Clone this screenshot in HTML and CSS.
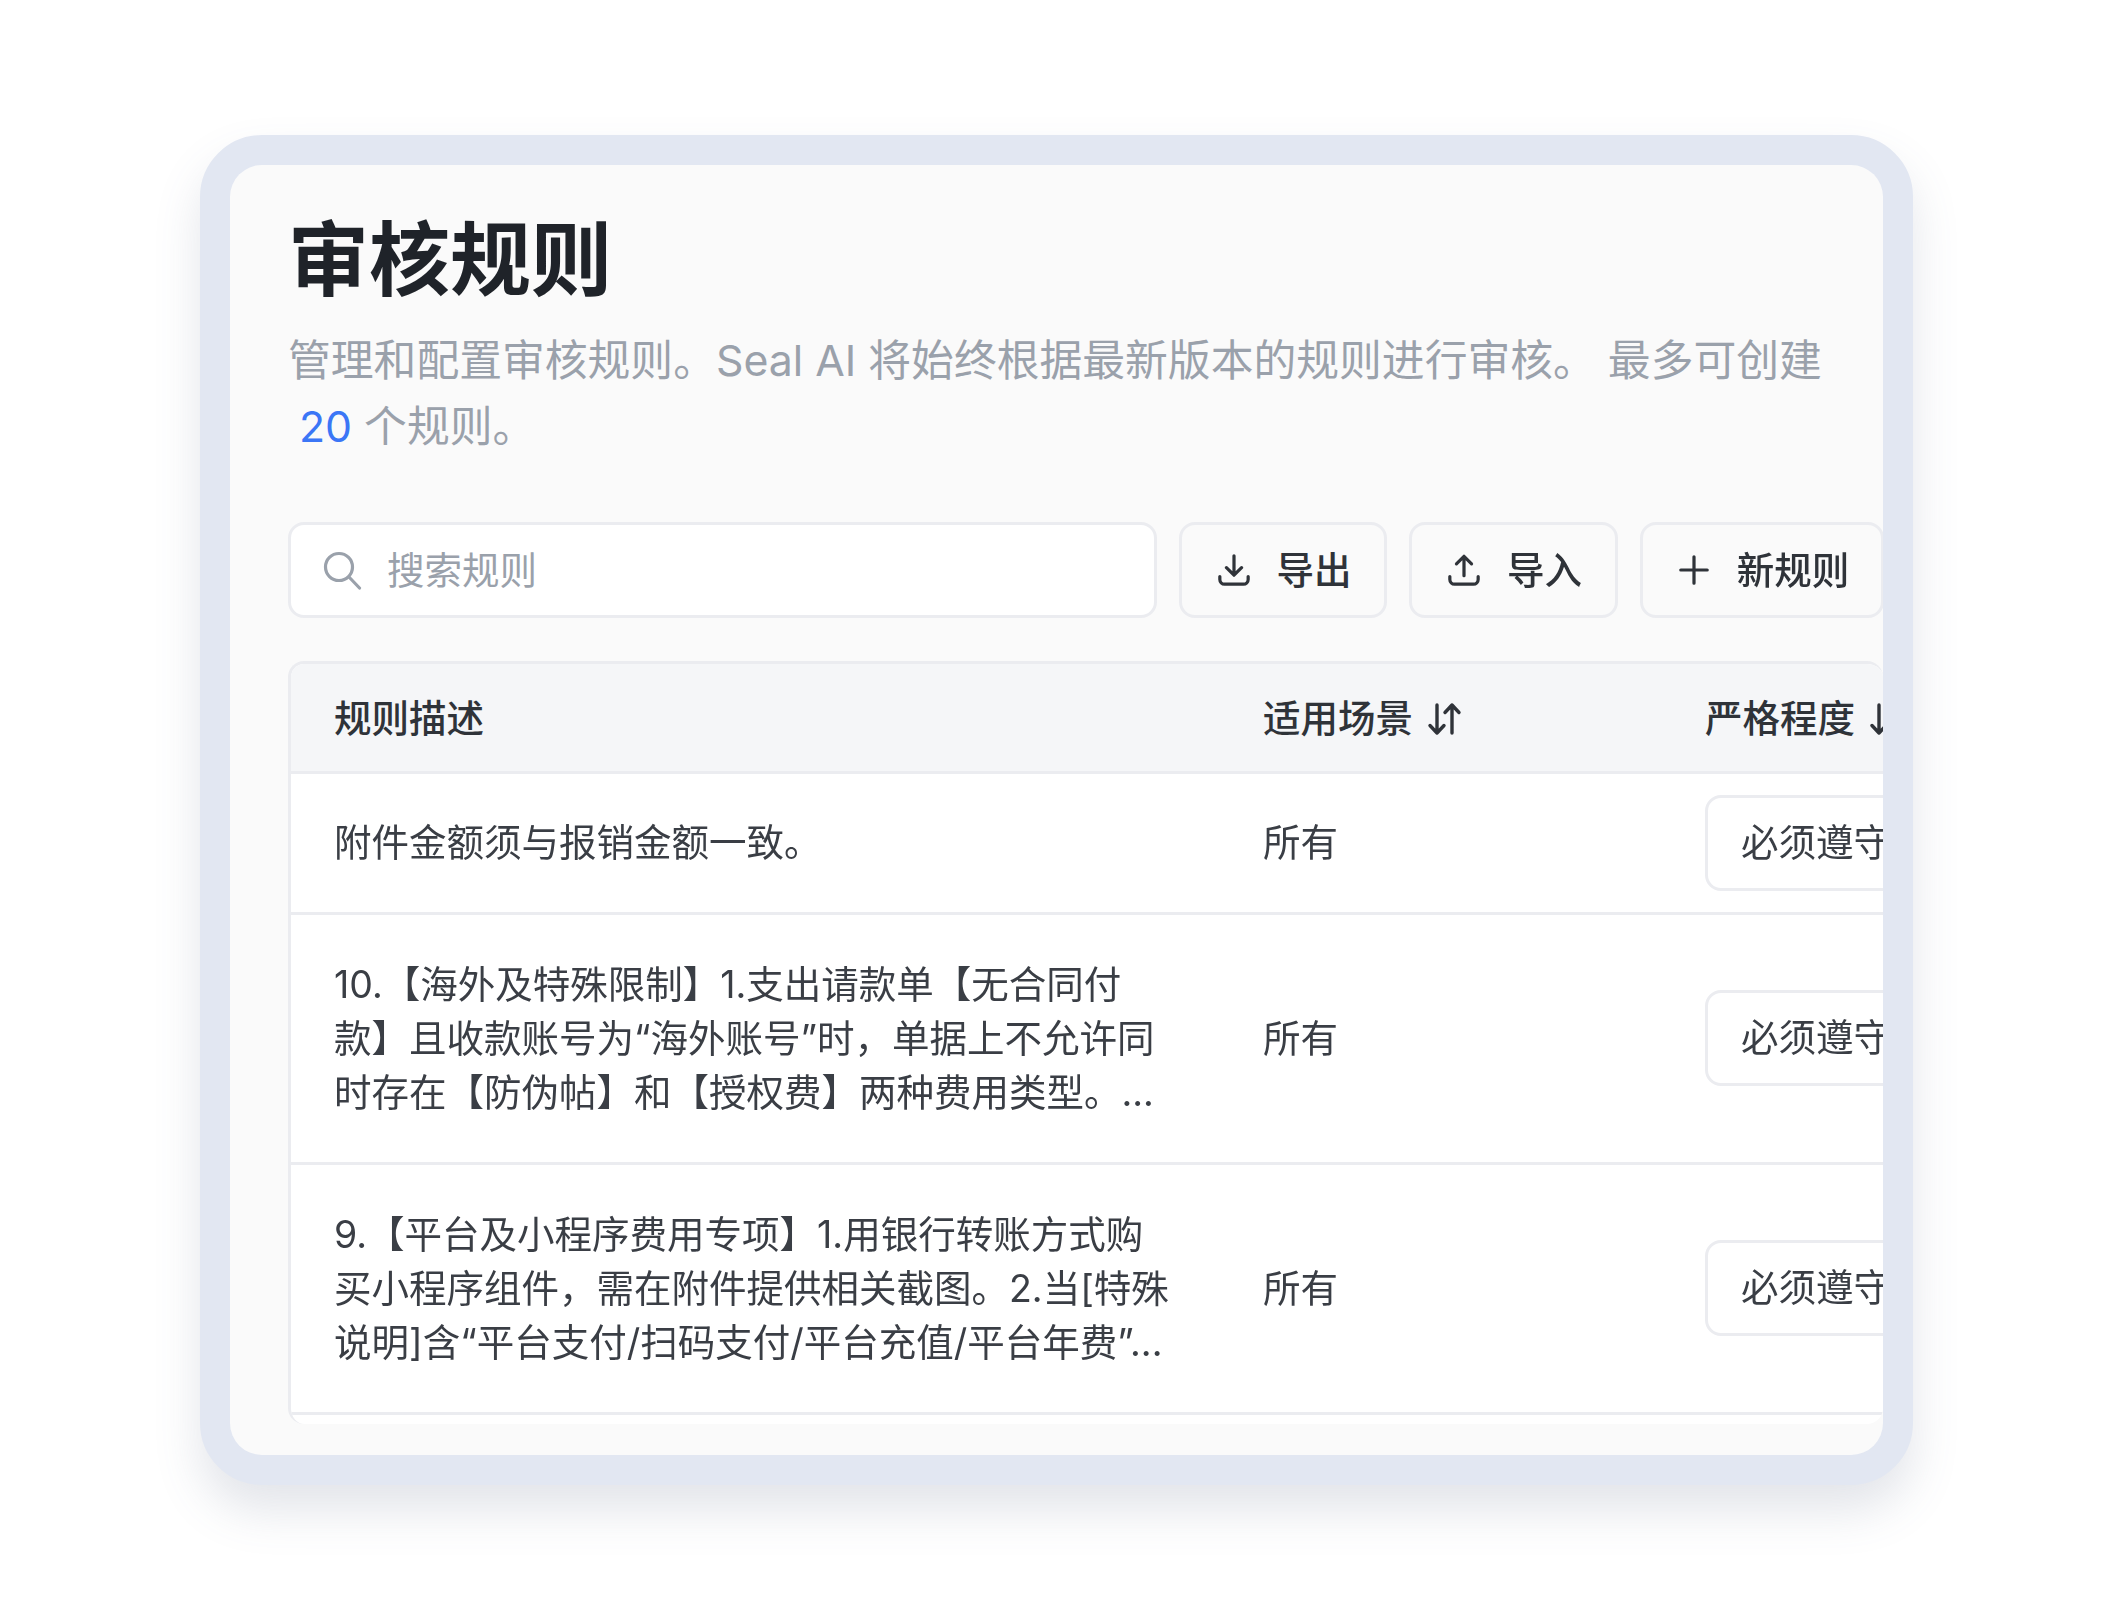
FILE: index.html
```html
<!DOCTYPE html>
<html lang="zh-CN">
<head>
<meta charset="utf-8">
<title>审核规则</title>
<link rel="stylesheet" href="styles.css">
</head>
<body>
<main class="frame">
  <div class="panel">
    <header class="intro">
      <h1 class="title">审核规则</h1>
      <p class="subtitle">管理和配置审核规则。Seal AI 将始终根据最新版本的规则进行审核。 最多可创建<span class="count">20</span>个规则。</p>
    </header>
    <div class="toolbar">
      <label class="search">
        <svg class="icon-search" viewBox="0 0 40 40" fill="none" stroke="currentColor" stroke-width="3.200" stroke-linecap="round"><circle cx="17" cy="17" r="13.500"/><path d="M27 27l10.500 11"/></svg>
        <span class="label">搜索规则</span>
      </label>
      <button class="btn btn-export">
        <svg class="icon" viewBox="0 0 36 36" fill="none" stroke="currentColor" stroke-width="3.400" stroke-linecap="round" stroke-linejoin="round"><path d="M18 3v20M10 15.500l8 8 8-8M3 25v3a5 5 0 0 0 5 5h20a5 5 0 0 0 5-5v-3"/></svg>
        <span class="label">导出</span>
      </button>
      <button class="btn btn-import">
        <svg class="icon" viewBox="0 0 36 36" fill="none" stroke="currentColor" stroke-width="3.400" stroke-linecap="round" stroke-linejoin="round"><path d="M18 24V4M10 11.500l8-8 8 8M3 25v3a5 5 0 0 0 5 5h20a5 5 0 0 0 5-5v-3"/></svg>
        <span class="label">导入</span>
      </button>
      <button class="btn btn-new">
        <svg class="icon" viewBox="0 0 36 36" fill="none" stroke="currentColor" stroke-width="3.400" stroke-linecap="round"><path d="M18 4v28M4 18h28"/></svg>
        <span class="label">新规则</span>
      </button>
    </div>
    <div class="table-wrap">
      <table class="rules">
        <colgroup><col class="col-rule"><col class="col-scene"><col class="col-level"></colgroup>
        <thead>
          <tr>
            <th><span class="th-inner">规则描述</span></th>
            <th><span class="th-inner">适用场景
              <svg class="icon-sort" viewBox="0 0 36 36" fill="none" stroke="currentColor" stroke-width="3.400" stroke-linecap="round" stroke-linejoin="round"><path d="M10 4v28M3 24.500l7 7.500 7-7.500M25 32V4M18 11.500L25 4l7 7.500"/></svg></span></th>
            <th><span class="th-inner">严格程度
              <svg class="icon-sort" viewBox="0 0 36 36" fill="none" stroke="currentColor" stroke-width="3.400" stroke-linecap="round" stroke-linejoin="round"><path d="M10 4v28M3 24.500l7 7.500 7-7.500M25 32V4M18 11.500L25 4l7 7.500"/></svg></span></th>
          </tr>
        </thead>
        <tbody>
          <tr class="row-short">
            <td class="rule">附件金额须与报销金额一致。</td>
            <td>所有</td>
            <td class="level"><span class="tag">必须遵守</span></td>
          </tr>
          <tr>
            <td class="rule">10.【海外及特殊限制】1.支出请款单【无合同付款】且收款账号为“海外账号”时，单据上不允许同时存在【防伪帖】和【授权费】两种费用类型。...</td>
            <td>所有</td>
            <td class="level"><span class="tag">必须遵守</span></td>
          </tr>
          <tr>
            <td class="rule">9.【平台及小程序费用专项】1.用银行转账方式购买小程序组件，需在附件提供相关截图。2.当[特殊说明]含“平台支付/扫码支付/平台充值/平台年费”...</td>
            <td>所有</td>
            <td class="level"><span class="tag">必须遵守</span></td>
          </tr>
        </tbody>
      </table>
    </div>
  </div>
</main>
</body>
</html>
```

FILE: styles.css
```css
* { box-sizing: border-box; }

html, body { margin: 0; background: #fff; }

body {
  width: 2112px;
  height: 1620px;
  overflow: hidden;
  padding: 135px 0 0 200px;
  font-family: Inter, "Noto Sans CJK SC", sans-serif;
  color: #3a3e45;
}

.frame {
  width: 1713px;
  border: 30px solid #e2e7f2;
  border-radius: 62px;
  background: #e2e7f2;
  box-shadow: 0 26px 46px rgba(90, 100, 130, 0.17);
}

.panel {
  height: 1290px;
  padding: 50px 0 35px 58px;
  background: #fafafa;
  border-radius: 32px;
  overflow: hidden;
  filter: blur(0.6px);
}

.intro { padding-right: 58px; }

.title {
  margin: 0;
  font-size: 81px;
  line-height: 90px;
  font-weight: 700;
  color: #1f2329;
}

.subtitle {
  margin: 23px 0 0;
  font-size: 42.8px;
  line-height: 66px;
  color: #9aa1ab;
}

.count {
  margin: 0 12px 0 11px;
  color: #3b76f6;
}

.toolbar {
  display: flex;
  gap: 22px;
  margin-top: 62px;
  height: 96px;
}

.search {
  flex: 0 0 869px;
  display: flex;
  align-items: center;
  gap: 25px;
  padding-left: 31px;
  background: #fff;
  border: 3px solid #ebecf0;
  border-radius: 16px;
  color: #9aa1ab;
  font-size: 37.5px;
}

.icon-search { width: 40px; height: 40px; flex: none; }

.label { padding-bottom: 6px; }

.btn {
  display: flex;
  align-items: center;
  justify-content: center;
  gap: 26px;
  height: 96px;
  padding: 0 0 0 2px;
  background: #fafafa;
  border: 3px solid #ebecf0;
  border-radius: 16px;
  font: 500 37.5px Inter, "Noto Sans CJK SC", sans-serif;
  color: #2f3339;
}

.btn-export { flex: 0 0 208px; }
.btn-import { flex: 0 0 209px; }
.btn-new { flex: 0 0 244px; }

.icon { width: 34px; height: 34px; flex: none; }

.table-wrap {
  margin-top: 43px;
  padding-bottom: 9px;
  background: #fff;
  border-top: 3px solid #ebecf0;
  border-left: 3px solid #ebecf0;
  border-radius: 16px;
  overflow: hidden;
}

.rules {
  table-layout: fixed;
  width: 1668px;
  border-collapse: collapse;
  font-size: 37.5px;
  line-height: 54px;
}

.col-rule { width: 926px; }
.col-scene { width: 442px; }
.col-level { width: 300px; }

.rules th {
  height: 108px;
  padding: 0 0 0 46px;
  text-align: left;
  font-weight: 500;
  color: #2f3339;
  background: #f5f6f8;
  border-bottom: 3px solid #ebecf0;
}

.rules th:first-child { padding-left: 43px; }

.th-inner {
  display: flex;
  align-items: center;
  gap: 14px;
  padding-top: 4px;
  white-space: nowrap;
}

.icon-sort { width: 36px; height: 36px; flex: none; }

.rules td {
  padding: 43px 0 42px 46px;
  vertical-align: middle;
  border-bottom: 3px solid #ebecf0;
}

.rules td.rule { padding: 43px 45px 42px 43px; }

.rules td.level { padding-top: 0; padding-bottom: 0; }

.rules .row-short td { padding-top: 42px; }

.rules .row-short td.level { padding-top: 0; }

.tag {
  display: inline-flex;
  align-items: center;
  height: 96px;
  padding: 0 33px;
  background: #fff;
  border: 3px solid #ebecf0;
  border-radius: 16px;
  white-space: nowrap;
}
```
